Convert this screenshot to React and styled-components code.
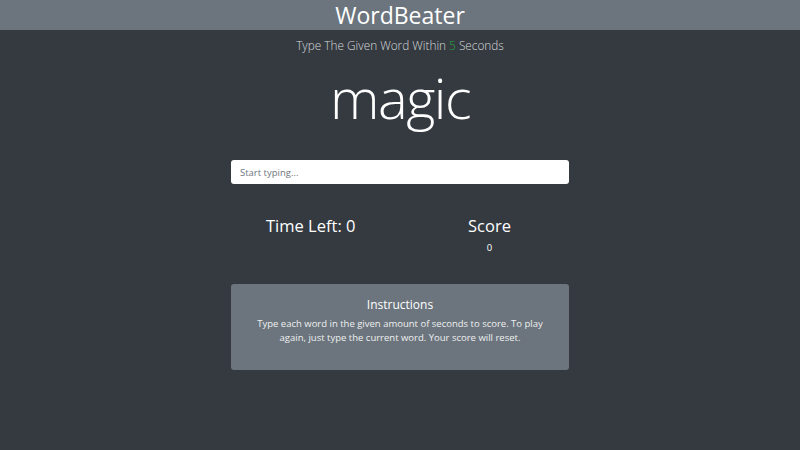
import React from "react";
import styled, { createGlobalStyle } from "styled-components";

const Global = createGlobalStyle`
  html, body { margin: 0; padding: 0; }
  body {
    background: #343a40;
    font-family: "Open Sans", "Noto Sans", sans-serif;
    color: #fff;
    height: 450px;
    overflow: hidden;
  }
`;

const Header = styled.header`
  height: 30px;
  background: #6c757d;
  display: flex;
  align-items: center;
  justify-content: center;
`;

const Title = styled.h1`
  margin: 0;
  font-size: 23px;
  font-weight: 400;
  line-height: 30px;
  color: #fff;
`;

const Main = styled.main`
  width: 338px;
  margin: 0 auto;
  display: flex;
  flex-direction: column;
  align-items: stretch;
`;

const Lead = styled.p`
  margin: 6px 0 0;
  text-align: center;
  font-size: 11.8px;
  font-weight: 300;
  line-height: 18px;
  color: #d6d9dc;
`;

const Seconds = styled.span`
  color: #28a745;
`;

const Word = styled.h2`
  margin: 8px 0 0;
  text-align: center;
  font-size: 56px;
  font-weight: 300;
  letter-spacing: -1.5px;
  line-height: 70px;
  color: #fff;
`;

const Input = styled.input`
  margin-top: 28px;
  height: 24px;
  box-sizing: border-box;
  border: none;
  border-radius: 3px;
  background: #fff;
  padding: 0 9px;
  font-family: inherit;
  font-size: 9.5px;
  color: #495057;
  outline: none;
  &::placeholder { color: #6c757d; }
`;

const Stats = styled.div`
  margin-top: 30px;
  display: grid;
  grid-template-columns: 1fr 1fr;
`;

const Stat = styled.div`
  display: flex;
  flex-direction: column;
  align-items: ${(p) => (p.$left ? "flex-start" : "center")};
  padding-left: ${(p) => p.$pad || 0}px;
`;

const StatTitle = styled.h3`
  margin: 0;
  font-size: 16.5px;
  font-weight: 400;
  line-height: 24px;
`;

const StatValue = styled.span`
  margin-top: 3px;
  font-size: 9.5px;
  line-height: 14px;
`;

const Card = styled.section`
  margin-top: 29px;
  height: 86px;
  box-sizing: border-box;
  background: #6c757d;
  border-radius: 3px;
  padding: 12px 16px;
  text-align: center;
`;

const CardTitle = styled.h5`
  margin: 0;
  font-size: 12px;
  font-weight: 400;
  line-height: 18px;
`;

const CardText = styled.p`
  margin: 3px 0 0;
  font-size: 9.5px;
  line-height: 14px;
  color: #eef0f1;
`;

export default function App() {
  return (
    <>
      <Global />
      <Header>
        <Title>WordBeater</Title>
      </Header>
      <Main>
        <Lead>
          Type The Given Word Within <Seconds>5</Seconds> Seconds
        </Lead>
        <Word>magic</Word>
        <Input placeholder="Start typing..." />
        <Stats>
          <Stat $left $pad={35}>
            <StatTitle>Time Left: 0</StatTitle>
          </Stat>
          <Stat $pad={10}>
            <StatTitle>Score</StatTitle>
            <StatValue>0</StatValue>
          </Stat>
        </Stats>
        <Card>
          <CardTitle>Instructions</CardTitle>
          <CardText>
            Type each word in the given amount of seconds to score. To play
            again, just type the current word. Your score will reset.
          </CardText>
        </Card>
      </Main>
    </>
  );
}
